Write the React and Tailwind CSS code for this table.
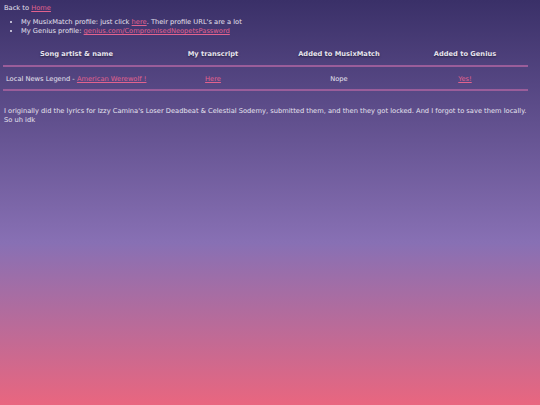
export default function App() {
  const link = 'text-[#e2628e] underline';
  const th = 'pt-[7px] pb-[6px] font-bold [text-shadow:0_1px_2px_rgba(0,0,0,0.5)]';
  const td = 'pt-[8px] pb-[5px]';
  return (
    <div className="min-h-[405px] bg-[linear-gradient(to_bottom,#3a3068_0%,#8870b4_60%,#e9667f_100%)] px-1 pt-[4px] text-[6.7px] leading-[9px] text-[#e6e3ef] font-['DejaVu_Sans',Verdana,sans-serif]">
      <p>
        Back to <a className={link} href="#">Home</a>
      </p>
      <ul className="mt-[5px] list-disc pl-[17px]">
        <li>
          My MusixMatch profile: just click <a className={link} href="#">here</a>. Their profile URL's are a lot
        </li>
        <li>
          My Genius profile: <a className={link} href="#">genius.com/CompromisedNeopetsPassword</a>
        </li>
      </ul>
      <table className="mt-[7px] w-[525px] -ml-px border-collapse table-fixed">
        <thead>
          <tr className="border-b-2 border-[#9a5d9a]">
            <th className={`w-[147px] ${th}`}>Song artist &amp; name</th>
            <th className={th}>My transcript</th>
            <th className={th}>Added to MusixMatch</th>
            <th className={th}>Added to Genius</th>
          </tr>
        </thead>
        <tbody>
          <tr className="border-b-2 border-[#9a5d9a]">
            <td className={`${td} pl-[3px] text-left`}>
              Local News Legend - <a className={link} href="#">American Werewolf !</a>
            </td>
            <td className={`${td} text-center`}>
              <a className={link} href="#">Here</a>
            </td>
            <td className={`${td} text-center`}>Nope</td>
            <td className={`${td} text-center`}>
              <a className={link} href="#">Yes!</a>
            </td>
          </tr>
        </tbody>
      </table>
      <p className="mt-[16px]">
        I originally did the lyrics for Izzy Camina's Loser Deadbeat &amp; Celestial Sodemy, submitted them, and then they got locked. And I forgot to save them locally. So uh idk
      </p>
    </div>
  );
}
